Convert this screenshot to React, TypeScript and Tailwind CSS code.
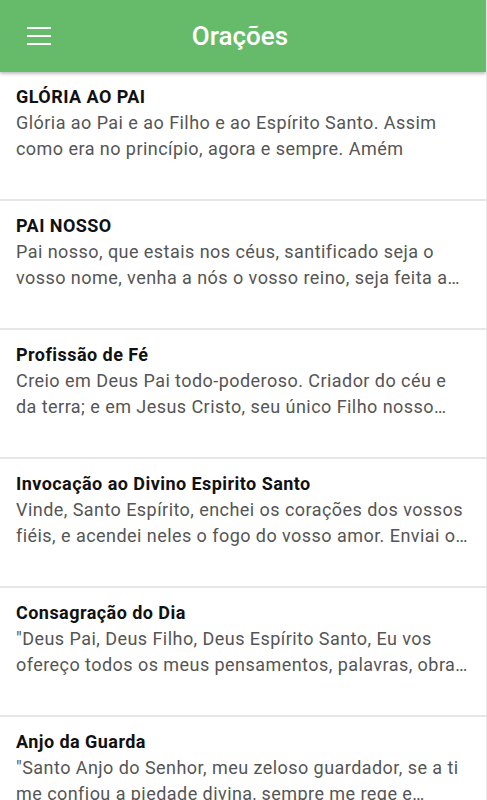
import React from 'react';

interface Prayer {
  title: string;
  text: string;
}

const prayers: Prayer[] = [
  {
    title: 'GLÓRIA AO PAI',
    text: 'Glória ao Pai e ao Filho e ao Espírito Santo. Assim como era no princípio, agora e sempre. Amém',
  },
  {
    title: 'PAI NOSSO',
    text: 'Pai nosso, que estais nos céus, santificado seja o vosso nome, venha a nós o vosso reino, seja feita a vossa vontade, assim na terra como no céu.',
  },
  {
    title: 'Profissão de Fé',
    text: 'Creio em Deus Pai todo-poderoso. Criador do céu e da terra; e em Jesus Cristo, seu único Filho nosso Senhor.',
  },
  {
    title: 'Invocação ao Divino Espirito Santo',
    text: 'Vinde, Santo Espírito, enchei os corações dos vossos fiéis, e acendei neles o fogo do vosso amor. Enviai o vosso Espírito e tudo será criado.',
  },
  {
    title: 'Consagração do Dia',
    text: '"Deus Pai, Deus Filho, Deus Espírito Santo, Eu vos ofereço todos os meus pensamentos, palavras, obras e ações deste dia.',
  },
  {
    title: 'Anjo da Guarda',
    text: '"Santo Anjo do Senhor, meu zeloso guardador, se a ti me confiou a piedade divina, sempre me rege e guarda, governa e ilumina. Amém."',
  },
];

export default function App() {
  return (
    <div className="h-[800px] overflow-hidden bg-white font-['Roboto',sans-serif] border-r border-[#e8e8e8]">
      <header className="relative z-10 flex h-[72px] items-center bg-[#66bb6a] shadow-[0_2px_3px_rgba(0,0,0,0.25)]">
        <button className="ml-[27px] flex w-6 flex-col gap-[6px]">
          <span className="block h-[2px] w-6 bg-white" />
          <span className="block h-[2px] w-6 bg-white" />
          <span className="block h-[2px] w-6 bg-white" />
        </button>
        <h1 className="absolute left-0 right-[6px] mx-auto w-fit text-[26px] font-medium text-white">Orações</h1>
      </header>

      <ul>
        {prayers.map((p, i) => (
          <li key={i} className="h-[129px] border-b-2 border-[#e6e6e6] pl-4 pr-4 pt-[12px] tracking-[0.45px]">
            <h2 className="text-[18px] font-bold leading-[26px] text-[#111]">{p.title}</h2>
            <p className="line-clamp-2 text-[18px] leading-[26px] text-[#555]">{p.text}</p>
          </li>
        ))}
      </ul>
    </div>
  );
}
